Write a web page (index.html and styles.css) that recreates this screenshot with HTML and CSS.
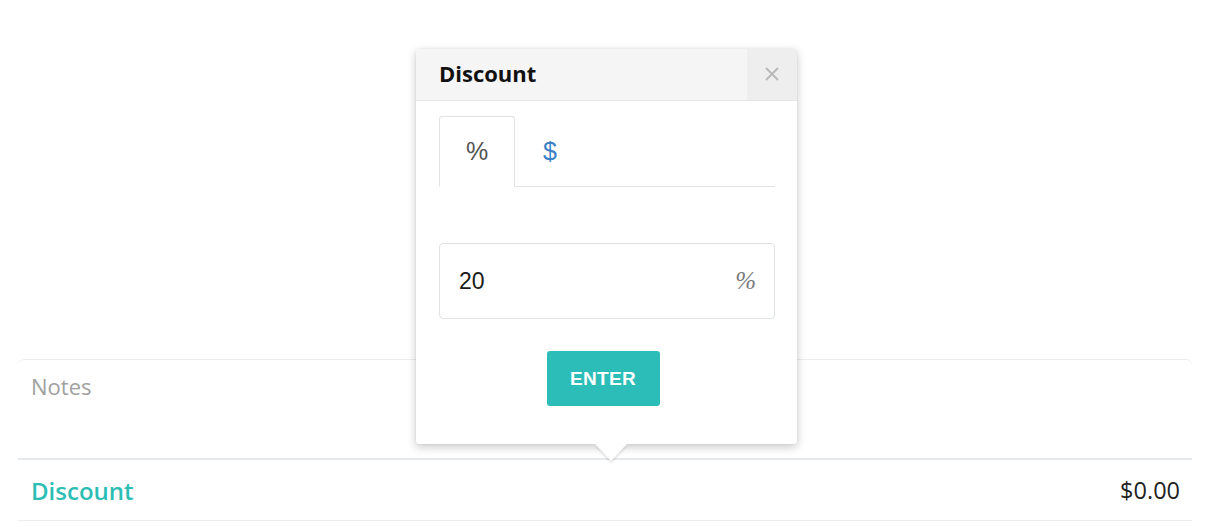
FILE: index.html
```html
<!DOCTYPE html>
<html>
<head>
<meta charset="utf-8">
<link rel="stylesheet" href="styles.css">
</head>
<body>
<div class="page">
  <div class="notes">Notes</div>
  <div class="discount-row">
    <span class="discount-label">Discount</span>
    <span class="discount-value">$0.00</span>
  </div>

  <div class="popover">
    <div class="pop-header">
      <span class="pop-title">Discount</span>
      <span class="pop-close">
        <svg width="14" height="14" viewBox="0 0 14 14"><path d="M1 1L13 13M13 1L1 13" stroke="#b9b9b9" stroke-width="2"/></svg>
      </span>
    </div>
    <div class="pop-body">
      <div class="tabs">
        <div class="tab active">%</div>
        <div class="tab link">$</div>
      </div>
      <div class="field">
        <span class="field-value">20</span>
        <span class="field-unit">%</span>
      </div>
      <div class="actions">
        <button class="enter">ENTER</button>
      </div>
    </div>
    <div class="arrow"></div>
  </div>
</div>
</body>
</html>
```
FILE: styles.css
```css
html, body {
  margin: 0;
  padding: 0;
  background: #fff;
}
.page {
  position: relative;
  width: 1209px;
  height: 527px;
  padding-top: 359px;
  box-sizing: border-box;
  font-family: "Open Sans", "Liberation Sans", sans-serif;
}
.notes {
  margin: 0 17px 0 18px;
  height: 101px;
  border-top: 1px solid #ececec;
  border-bottom: 2px solid #e7eaed;
  border-radius: 6px 6px 0 0;
  box-sizing: border-box;
  padding: 11px 0 0 13px;
  font-size: 22px;
  color: #a0a0a0;
}
.discount-row {
  margin: 0 17px 0 18px;
  height: 61px;
  border-bottom: 1px solid #ececec;
  box-sizing: border-box;
  display: flex;
  align-items: center;
  justify-content: space-between;
  padding: 0 12px 0 13px;
}
.discount-label {
  font-size: 24px;
  font-weight: 600;
  color: #2cbdb5;
}
.discount-value {
  font-size: 23.5px;
  color: #222;
}
.popover {
  position: absolute;
  left: 416px;
  top: 49px;
  width: 381px;
  height: 395px;
  background: #fff;
  border-radius: 3px;
  box-shadow: 0 3px 10px rgba(0,0,0,0.22), 0 0 2px rgba(0,0,0,0.08);
}
.pop-header {
  height: 52px;
  background: #f5f5f5;
  border-bottom: 1px solid #e6e6e6;
  box-sizing: border-box;
  display: flex;
  align-items: stretch;
  border-radius: 3px 3px 0 0;
}
.pop-title {
  flex: 1;
  display: flex;
  align-items: center;
  padding: 0 0 3px 23px;
  font-size: 22px;
  font-weight: 700;
  color: #111;
}
.pop-close {
  width: 50px;
  background: #eeeeee;
  display: flex;
  align-items: center;
  justify-content: center;
  padding-bottom: 2px;
  border-radius: 0 3px 0 0;
}
.pop-body {
  padding: 15px 22px 0 23px;
}
.tabs {
  display: flex;
  height: 71px;
  border-bottom: 1px solid #e3e3e3;
  box-sizing: border-box;
}
.tab {
  width: 76px;
  display: flex;
  align-items: center;
  justify-content: center;
  font-family: "Liberation Sans", Arial, sans-serif;
  font-size: 25px;
  box-sizing: border-box;
}
.tab.active {
  border: 1px solid #e3e3e3;
  border-bottom: 1px solid #fff;
  margin-bottom: -1px;
  border-radius: 3px 3px 0 0;
  color: #555;
}
.tab.link {
  color: #3a80c6;
  width: 70px;
}
.field {
  margin-top: 56px;
  height: 76px;
  border: 1px solid #dfe3e6;
  border-radius: 4px;
  box-sizing: border-box;
  display: flex;
  align-items: center;
  justify-content: space-between;
  padding: 0 18px 0 19px;
}
.field-value {
  font-family: "Liberation Sans", Arial, sans-serif;
  font-size: 23px;
  color: #1a1a1a;
}
.field-unit {
  font-family: "Liberation Serif", "Times New Roman", serif;
  font-style: italic;
  font-size: 25px;
  color: #7a7a7a;
}
.actions {
  margin-top: 32px;
  display: flex;
  justify-content: center;
  padding-right: 8px;
}
.enter {
  width: 113px;
  height: 55px;
  border: none;
  border-radius: 3px;
  background: #2cbdb8;
  color: #fff;
  font-family: "Liberation Sans", Arial, sans-serif;
  font-weight: 700;
  font-size: 19px;
  letter-spacing: 0.3px;
  padding: 0;
}
.arrow {
  position: absolute;
  left: 179px;
  bottom: -17px;
  width: 0;
  height: 0;
  border-left: 16px solid transparent;
  border-right: 16px solid transparent;
  border-top: 17px solid #fff;
  filter: drop-shadow(0 2px 1px rgba(0,0,0,0.12));
}
```
